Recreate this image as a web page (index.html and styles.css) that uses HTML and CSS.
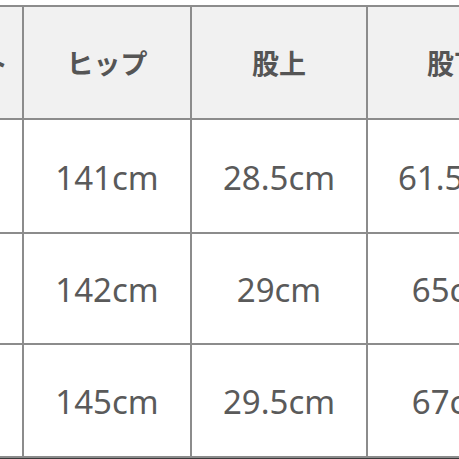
FILE: index.html
```html
<!DOCTYPE html>
<html lang="ja">
<head>
<meta charset="utf-8">
<link rel="stylesheet" href="styles.css">
</head>
<body>
<div class="frame">
  <div class="sheet">
    <div class="cell head">ウエスト</div>
    <div class="cell head">ヒップ</div>
    <div class="cell head">股上</div>
    <div class="cell head">股下</div>

    <div class="cell">71cm</div>
    <div class="cell">141cm</div>
    <div class="cell">28.5cm</div>
    <div class="cell">61.5cm</div>

    <div class="cell">73cm</div>
    <div class="cell">142cm</div>
    <div class="cell">29cm</div>
    <div class="cell">65cm</div>

    <div class="cell">75cm</div>
    <div class="cell">145cm</div>
    <div class="cell">29.5cm</div>
    <div class="cell">67cm</div>
  </div>
  <div class="edge"></div>
</div>
</body>
</html>
```

FILE: styles.css
```css
html, body {
  margin: 0;
  padding: 0;
  background: #ffffff;
}
.frame {
  width: 459px;
  height: 459px;
  overflow: hidden;
  padding-top: 5px;
  box-sizing: border-box;
}
.sheet {
  display: grid;
  grid-template-columns: 136px 166px 174px 172px;
  grid-template-rows: 111px 112px 109px 111px;
  gap: 2px;
  padding: 2px;
  background: #8c8c8c;
  margin-left: -116px;
  width: max-content;
}
.cell {
  background: #ffffff;
  display: flex;
  align-items: center;
  justify-content: center;
  font-family: "Noto Sans", "Noto Sans CJK JP", sans-serif;
  font-size: 33px;
  color: #5a5a5a;
  white-space: nowrap;
  padding-top: 2px;
}
.head {
  background: #f1f1f1;
  font-family: "Noto Sans CJK JP", sans-serif;
  font-size: 27px;
  font-weight: 700;
  color: #555555;
  padding-top: 0;
}
.edge {
  height: 2px;
  background: #3a3a3a;
}
```
